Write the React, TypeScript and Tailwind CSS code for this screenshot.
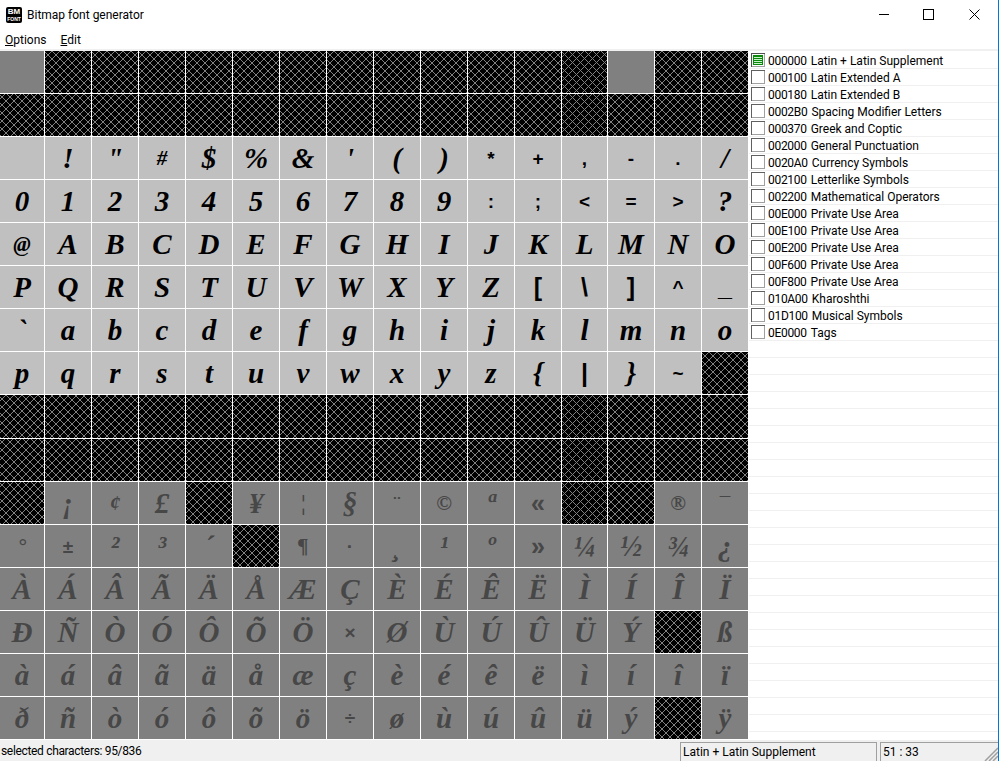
// App.tsx - Bitmap font generator window
const UI_FONT = { fontFamily: 'Roboto, sans-serif' };

// bloques de unicode que salen en la lista de la derecha
const bloques = [
    ['000000', 'Latin + Latin Supplement'],
    ['000100', 'Latin Extended A'],
    ['000180', 'Latin Extended B'],
    ['0002B0', 'Spacing Modifier Letters'],
    ['000370', 'Greek and Coptic'],
    ['002000', 'General Punctuation'],
    ['0020A0', 'Currency Symbols'],
    ['002100', 'Letterlike Symbols'],
    ['002200', 'Mathematical Operators'],
    ['00E000', 'Private Use Area'],
    ['00E100', 'Private Use Area'],
    ['00E200', 'Private Use Area'],
    ['00F600', 'Private Use Area'],
    ['00F800', 'Private Use Area'],
    ['010A00', 'Kharoshthi'],
    ['01D100', 'Musical Symbols'],
    ['0E0000', 'Tags'],
];

// codigos que no existen en la fuente (celda con trama)
const sinGlifo = (code: number) => {
    if (code === 0 || code === 13) return false;
    if (code < 32) return true;
    if (code === 127) return true;
    if (code >= 128 && code < 160) return true;
    return [160, 164, 172, 173, 181, 222, 254].includes(code);
};

// en la fuente original estos van rectos, no cursivos
const RECTOS = new Set('+-*<=>^~,.:;×÷±¯¬¨·'.split(''));
const RECTOS_GRANDES = new Set('[\\]|_«»'.split(''));
const CHICOS = new Set('@#©®¶°¢¦'.split(''));

const Glifo = ({ ch }: { ch: string }) => {
    if (RECTOS.has(ch)) {
        return <span className="font-['Liberation_Sans',sans-serif] font-bold text-[19px] leading-none">{ch}</span>;
    }
    if (RECTOS_GRANDES.has(ch)) {
        return <span className="font-['Liberation_Sans',sans-serif] font-bold text-[25px] leading-none">{ch}</span>;
    }
    if (CHICOS.has(ch)) {
        return <span className="font-['Liberation_Serif',serif] font-bold italic text-[21px] leading-none">{ch}</span>;
    }
    return <span className="font-['Liberation_Serif',serif] font-bold italic text-[29px] leading-none">{ch}</span>;
};

const Celda = ({ code }: { code: number }) => {
    if (sinGlifo(code)) {
        return (
            <div className="[background:repeating-linear-gradient(45deg,#808080_0,#808080_1px,transparent_1px,transparent_5.657px),repeating-linear-gradient(-45deg,#808080_0,#808080_1px,transparent_1px,transparent_5.657px),#000]" />
        );
    }
    const ch = code === 13 || code === 0 || code === 32 ? '' : String.fromCharCode(code);
    const bg = code >= 128 || code < 32 ? 'bg-[#808080] text-[#474747]' : 'bg-[#c0c0c0] text-black';
    return (
        <div className={`flex items-center justify-center overflow-hidden ${bg}`}>
            <Glifo ch={ch} />
        </div>
    );
};

const Casilla = ({ activa }: { activa: boolean }) => (
    <svg width="14" height="14" viewBox="0 0 14 14" className="shrink-0" shapeRendering="crispEdges">
        <rect x="0" y="0" width="14" height="14" fill="#a0a0a0" />
        <rect x="1" y="1" width="12" height="12" fill="#fff" />
        <rect x="0" y="0" width="14" height="1" fill={activa ? '#505050' : '#606060'} />
        <rect x="0" y="0" width="1" height="14" fill={activa ? '#505050' : '#606060'} />
        {activa && (
            <>
                <rect x="2" y="2" width="10" height="10" fill="#0a8a0a" />
                <rect x="3" y="4" width="8" height="1" fill="#c8f0c8" />
                <rect x="3" y="6" width="8" height="1" fill="#c8f0c8" />
                <rect x="3" y="8" width="8" height="1" fill="#c8f0c8" />
                <rect x="3" y="10" width="8" height="1" fill="#c8f0c8" />
            </>
        )}
    </svg>
);

export default function App() {
    const filas = Array.from({ length: 40 }, (_, i) => bloques[i] ?? null);

    return (
        <div
            className="w-[999px] h-[761px] flex flex-col bg-white text-[12px] text-black border-r border-[#0078d7] overflow-hidden"
            style={UI_FONT}
        >
            {/* barra de titulo */}
            <div className="h-[30px] flex items-center shrink-0 pl-[6px]">
                <div className="w-4 h-4 bg-black rounded-[2px] text-white flex flex-col items-center justify-center font-['Liberation_Sans',sans-serif] font-bold">
                    <span className="text-[8px] leading-[8px]">BM</span>
                    <span className="text-[5px] leading-[6px]">FONT</span>
                </div>
                <span className="ml-[5px]">Bitmap font generator</span>
                <div className="ml-auto flex items-center">
                    <svg width="46" height="30" shapeRendering="crispEdges">
                        <rect x="19" y="14" width="10" height="1" fill="#000" />
                    </svg>
                    <svg width="46" height="30" shapeRendering="crispEdges">
                        <rect x="17.5" y="9.5" width="10" height="10" fill="none" stroke="#000" />
                    </svg>
                    <svg width="46" height="30">
                        <path d="M17.5 9.5 L27.5 19.5 M27.5 9.5 L17.5 19.5" stroke="#000" fill="none" />
                    </svg>
                </div>
            </div>

            {/* menu */}
            <div className="h-[19px] flex items-center shrink-0 pl-[5px] gap-[14px]">
                <span><span className="underline">O</span>ptions</span>
                <span><span className="underline">E</span>dit</span>
            </div>
            <div className="h-[2px] shrink-0 bg-[#f0f0f0]" />

            <div className="flex h-[689px] shrink-0">
                {/* tabla de caracteres */}
                <div className="w-[749px] shrink-0 grid gap-px bg-white grid-cols-[44px_repeat(11,46px)_45px_repeat(3,46px)] grid-rows-[repeat(8,42px)_43px_repeat(7,42px)]">
                    {Array.from({ length: 256 }, (_, code) => (
                        <Celda key={code} code={code} />
                    ))}
                </div>

                {/* lista de bloques */}
                <div className="flex-1 min-w-0 pt-px">
                    {filas.map((fila, i) => (
                        <div key={i} className="h-[17px] border-b border-[#f0f0f0] flex items-center pl-[2px] gap-[3px]">
                            {fila && (
                                <>
                                    <Casilla activa={i === 0} />
                                    <span className="whitespace-pre relative top-px tracking-[-0.3px]">{fila[0]}</span>
                                    <span className="whitespace-pre relative top-px ml-[1px]">{fila[1]}</span>
                                </>
                            )}
                        </div>
                    ))}
                </div>
            </div>

            {/* barra de estado */}
            <div className="flex-1 min-h-0 bg-[#f0f0f0] flex pt-[2px]">
                <div className="w-[680px] shrink-0 pl-px leading-[19px] tracking-[-0.33px]">selected characters: 95/836</div>
                <div className="w-[197px] shrink-0 border-l border-t border-r border-[#a0a0a0] pl-[2px] leading-[18px]">Latin + Latin Supplement</div>
                <div className="flex-1 ml-[3px] border-l border-t border-[#a0a0a0] pl-[2px] leading-[18px] flex justify-between">
                    <span>51 : 33</span>
                    <svg width="14" height="14" className="self-end">
                        <path d="M14 1 L1 14 M14 5 L5 14 M14 9 L9 14" stroke="#a0a0a0" strokeWidth="1.5" fill="none" />
                    </svg>
                </div>
            </div>
        </div>
    );
}
